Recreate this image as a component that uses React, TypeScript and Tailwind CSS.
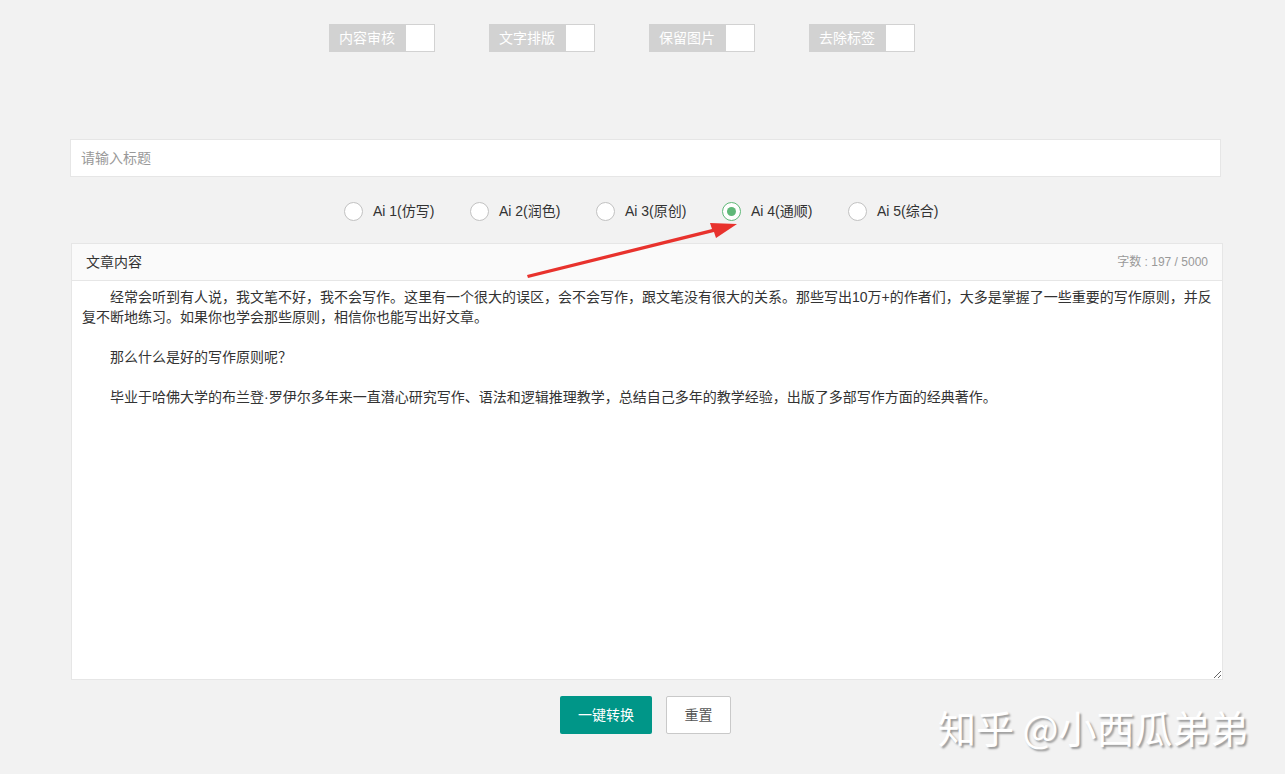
import React from "react";

const toggles = ["内容审核", "文字排版", "保留图片", "去除标签"];
const radios = ["Ai 1(仿写)", "Ai 2(润色)", "Ai 3(原创)", "Ai 4(通顺)", "Ai 5(综合)"];

const content =
  "　　经常会听到有人说，我文笔不好，我不会写作。这里有一个很大的误区，会不会写作，跟文笔没有很大的关系。那些写出10万+的作者们，大多是掌握了一些重要的写作原则，并反复不断地练习。如果你也学会那些原则，相信你也能写出好文章。\n\n　　那么什么是好的写作原则呢？\n\n　　毕业于哈佛大学的布兰登·罗伊尔多年来一直潜心研究写作、语法和逻辑推理教学，总结自己多年的教学经验，出版了多部写作方面的经典著作。";

export default function App() {
  return (
    <div
      className="relative min-h-[774px] w-full bg-[#f2f2f2] text-[#333]"
      style={{ fontFamily: '"Liberation Sans", "Noto Sans CJK SC", sans-serif' }}
    >
      {/* toggles */}
      <div className="flex pl-[329px] pt-[24px] gap-[54px]">
        {toggles.map((t) => (
          <div key={t} className="flex h-[28px] w-[106px]">
            <div className="flex h-full w-[76px] items-center bg-[#d2d2d2] pl-[10px] text-[14px] text-white">
              {t}
            </div>
            <div className="h-full w-[30px] border border-[#d2d2d2] bg-white" />
          </div>
        ))}
      </div>

      {/* title input */}
      <div className="mx-[70px] mt-[87px] w-[1151px]">
        <input
          className="h-[38px] w-full border border-[#e6e6e6] bg-white px-[10px] text-[14px] text-[#333] outline-none placeholder:text-[#999]"
          placeholder="请输入标题"
        />
      </div>

      {/* radios */}
      <div className="flex pl-[344px] pt-[24px]">
        {radios.map((r, i) => {
          const checked = i === 3;
          return (
            <div key={r} className="flex h-[20px] w-[126px] items-center">
              <div
                className={
                  checked
                    ? "flex h-[19px] w-[19px] items-center justify-center rounded-full border border-[#5fb878] bg-white"
                    : "h-[19px] w-[19px] rounded-full border border-[#c2c2c2] bg-white"
                }
              >
                {checked && <div className="h-[9px] w-[9px] rounded-full bg-[#5fb878]" />}
              </div>
              <span className="ml-[10px] text-[14px] text-[#333]">{r}</span>
            </div>
          );
        })}
      </div>

      {/* article box */}
      <div className="ml-[71px] mt-[22px] w-[1152px] border border-[#e6e6e6] bg-white">
        <div className="flex h-[37px] items-center justify-between border-b border-[#e6e6e6] bg-[#fafafa] px-[14px]">
          <span className="text-[14px] text-[#333]">文章内容</span>
          <span className="text-[12px] text-[#999]">字数 : 197 / 5000</span>
        </div>
        <textarea
          className="block h-[398px] w-full resize-y bg-white px-[10px] pt-[6px] text-[14px] leading-[20px] text-[#333] outline-none"
          defaultValue={content}
        />
      </div>

      {/* buttons */}
      <div className="flex pl-[560px] pt-[16px] gap-[14px]">
        <button className="h-[38px] w-[92px] rounded-[2px] bg-[#009688] text-[14px] text-white">一键转换</button>
        <button className="h-[38px] w-[65px] rounded-[2px] border border-[#c9c9c9] bg-white text-[14px] text-[#555]">重置</button>
      </div>

      {/* red arrow */}
      <svg className="pointer-events-none absolute left-0 top-0" width="1285" height="774">
        <polygon points="528,278 527,275 712,229 710,223 737,224 716,238 714,232" fill="#e8322d" />
      </svg>

      {/* watermark */}
      <div
        className="pointer-events-none absolute left-[938px] top-[698px] text-[38px] text-white [text-shadow:2px_2px_2px_#9a9a9a]"
        style={{ fontFamily: '"Noto Sans CJK SC", sans-serif' }}
      >
        知乎 @小西瓜弟弟
      </div>
    </div>
  );
}
